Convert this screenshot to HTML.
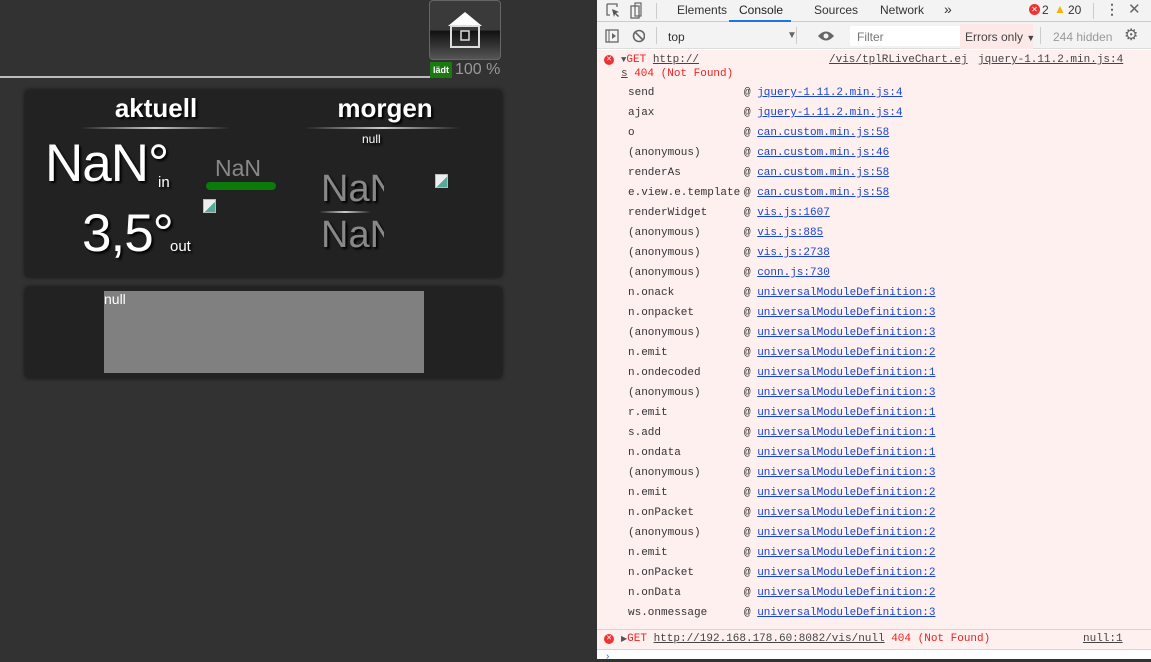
<!DOCTYPE html>
<html><head><meta charset="utf-8"><style>
*{margin:0;padding:0;box-sizing:border-box}
body{width:1151px;height:659px;overflow:hidden;background:#323232;font-family:"Liberation Sans",sans-serif;position:relative}
.abs{position:absolute}
.panel{position:absolute;background:#222;border-radius:4px;box-shadow:0 0 4px #111}
.w{color:#fff;text-shadow:2px 2px 2px #000}
.hr{position:absolute;height:2px;background:linear-gradient(to right,transparent,#ccc,transparent)}
#dev{position:absolute;left:597px;top:0;width:554px;height:659px;background:#fff;font-family:"Liberation Sans",sans-serif;font-size:12px;color:#333}
.mono{font-family:"Liberation Mono",monospace;font-size:11px}
.row{position:absolute;left:31px;height:20px;line-height:20px}
.row .a{position:absolute;left:0}
.row .b{position:absolute;left:116px;white-space:nowrap}
.lnk{color:#1a45d8;text-decoration:underline}
.brk{position:absolute;width:13px;height:14px;background:linear-gradient(135deg,#eee 55%,#5a9 55%);border:1px solid #bbb}
</style></head><body>
<div class="abs" style="left:429px;top:0;width:72px;height:60px;border:1px solid #666;border-radius:4px;background:linear-gradient(#3a3a3a 0,#3a3a3a 50%,#111 52%,#555 100%)">
<svg width="72" height="60" style="position:absolute;left:-1px;top:-1px"><polygon points="36,12 19,26 53,26" fill="#fff"/><rect x="22" y="26" width="28" height="21" fill="none" stroke="#ddd" stroke-width="2"/><rect x="32" y="31" width="8" height="9" fill="none" stroke="#ddd" stroke-width="1.5"/></svg>
</div>
<div class="abs" style="left:430px;top:62px;width:22px;height:16px;background:#1a7a10;color:#fff;font-size:9px;font-weight:bold;line-height:16px;text-align:center">lädt</div>
<div class="abs" style="left:455px;top:61px;color:#999;font-size:16px">100 %</div>
<div class="abs" style="left:0;top:76px;width:430px;height:2px;background:#bbb"></div>

<div class="panel" style="left:25px;top:90px;width:477px;height:187px">
<div class="abs w" style="left:0;width:262px;top:3px;text-align:center;font-size:26px;font-weight:bold">aktuell</div>
<div class="hr" style="left:55px;width:150px;top:37px"></div>
<div class="abs w" style="left:255px;width:210px;top:3px;text-align:center;font-size:26px;font-weight:bold">morgen</div>
<div class="hr" style="left:280px;width:155px;top:37px"></div>
<div class="abs w" style="left:337px;top:42px;font-size:12px">null</div>
<div class="abs w" style="left:20px;top:43px;font-size:53px;letter-spacing:-1px">NaN°</div>
<div class="abs w" style="left:133px;top:84px;font-size:15px">in</div>
<div class="abs" style="left:190px;top:65px;color:#888;font-size:23px">NaN</div>
<div class="abs" style="left:181px;top:92px;width:70px;height:8px;background:#0a7a0a;border-radius:4px"></div>
<div class="brk" style="left:178px;top:109px"></div>
<div class="abs w" style="left:57px;top:113px;font-size:53px;letter-spacing:-1px">3,5°</div>
<div class="abs w" style="left:145px;top:148px;font-size:15px">out</div>
<div class="abs" style="left:296px;top:78px;width:63px;overflow:hidden;color:#888;font-size:38px;text-shadow:2px 2px 2px #000;white-space:nowrap">NaN</div>
<div class="hr" style="left:294px;width:52px;top:121px"></div>
<div class="abs" style="left:296px;top:124px;width:63px;overflow:hidden;color:#888;font-size:38px;text-shadow:2px 2px 2px #000;white-space:nowrap">NaN</div>
<div class="brk" style="left:410px;top:84px"></div>
</div>

<div class="panel" style="left:25px;top:287px;width:477px;height:91px">
<div class="abs" style="left:79px;top:4px;width:320px;height:82px;background:#808080"></div>
<div class="abs" style="left:79px;top:4px;color:#fff;font-size:14px">null</div>
</div>

<div id="dev">
<div class="abs" style="left:0;top:0;width:554px;height:22px;background:#f3f3f3;border-bottom:1px solid #ccc"></div>
<svg class="abs" style="left:8px;top:2px" width="40" height="18"><path d="M2 2h10v3M2 2v11h3" fill="none" stroke="#666" stroke-width="1.3"/><path d="M7 7l7 3-3 1 3 3-1 1-3-3-1 3z" fill="#555"/><rect x="26" y="4" width="8" height="12" fill="none" stroke="#666" stroke-width="1.3"/><rect x="30" y="1" width="6" height="13" fill="none" stroke="#666" stroke-width="1.2"/></svg>
<div class="abs" style="left:59px;top:3px;width:1px;height:16px;background:#ccc"></div>
<div class="abs" style="left:80px;top:3px">Elements</div>
<div class="abs" style="left:142px;top:3px;color:#222">Console</div>
<div class="abs" style="left:132px;top:20px;width:62px;height:2px;background:#1a73e8"></div>
<div class="abs" style="left:217px;top:3px">Sources</div>
<div class="abs" style="left:283px;top:3px">Network</div>
<div class="abs" style="left:347px;top:1px;font-size:14px">»</div>
<div class="abs" style="left:432px;top:4px;width:11px;height:11px;border-radius:50%;background:#e33;color:#fff;font-size:8px;line-height:11px;text-align:center">✕</div>
<div class="abs" style="left:445px;top:3px">2</div>
<div class="abs" style="left:457px;top:2px;color:#f4b400;font-size:12px">▲</div>
<div class="abs" style="left:471px;top:3px">20</div>
<div class="abs" style="left:496px;top:3px;width:1px;height:16px;background:#ccc"></div>
<div class="abs" style="left:508px;top:1px;font-size:14px;font-weight:bold;color:#666">⋮</div>
<div class="abs" style="left:531px;top:0px;font-size:15px;color:#666">✕</div>

<div class="abs" style="left:0;top:22px;width:554px;height:27px;background:#f3f3f3;border-bottom:1px solid #ddd"></div>
<svg class="abs" style="left:8px;top:29px" width="40" height="15"><rect x="1" y="1" width="12" height="12" fill="none" stroke="#666" stroke-width="1.3"/><path d="M4 1v12" stroke="#666"/><path d="M7 4l4 3-4 3z" fill="#666"/><circle cx="34" cy="7" r="5.5" fill="none" stroke="#666" stroke-width="1.6"/><path d="M30 3l8 8" stroke="#666" stroke-width="1.6"/></svg>
<div class="abs" style="left:59px;top:27px;width:1px;height:17px;background:#ccc"></div>
<div class="abs" style="left:71px;top:30px;color:#333">top</div>
<div class="abs" style="left:190px;top:30px;color:#666;font-size:10px">▼</div>
<div class="abs" style="left:199px;top:27px;width:1px;height:17px;background:#ccc"></div>
<svg class="abs" style="left:220px;top:30px" width="18" height="12"><path d="M1 6q8-9 16 0q-8 9-16 0z" fill="#666"/><circle cx="9" cy="6" r="2.5" fill="#f3f3f3"/></svg>
<div class="abs" style="left:253px;top:26px;width:110px;height:20px;background:#fff"></div>
<div class="abs" style="left:260px;top:30px;color:#777">Filter</div>
<div class="abs" style="left:363px;top:24px;width:73px;height:25px;background:#fde8e8"></div>
<div class="abs" style="left:368px;top:30px;color:#444">Errors only <span style="font-size:9px">▼</span></div>
<div class="abs" style="left:443px;top:27px;width:1px;height:17px;background:#ccc"></div>
<div class="abs" style="left:456px;top:30px;color:#999">244 hidden</div>
<div class="abs" style="left:527px;top:25px;font-size:16px;color:#666">⚙</div>

<div class="abs" style="left:0;top:50px;width:554px;height:580px;background:#fff0f0"></div>
<div class="abs" style="left:0;top:629px;width:554px;height:1px;background:#f5c8c8"></div>
<div class="abs" style="left:0;top:630px;width:554px;height:20px;background:#fff0f0;border-bottom:1px solid #f5c8c8"></div>

<div class="abs" style="left:7px;top:55px;width:10px;height:10px;border-radius:50%;background:#e33;color:#fff;font-size:7px;line-height:10px;text-align:center">✕</div>
<div class="abs mono" style="left:24px;top:54px;color:#e22;white-space:nowrap"><span style="color:#555;font-size:9px">▼</span>GET <span style="color:#444;text-decoration:underline">http://</span></div>
<div class="abs mono" style="left:232px;top:54px;color:#444;text-decoration:underline">/vis/tplRLiveChart.ej</div>
<div class="abs mono" style="left:381px;top:54px;color:#444;text-decoration:underline">jquery-1.11.2.min.js:4</div>
<div class="abs mono" style="left:24px;top:68px;color:#e22"><span style="color:#444;text-decoration:underline">s</span> 404 (Not Found)</div>

<div class="mono">
<div class="row" style="top:83px"><span class="a">send</span><span class="b">@ <span class="lnk">jquery-1.11.2.min.js:4</span></span></div>
<div class="row" style="top:103px"><span class="a">ajax</span><span class="b">@ <span class="lnk">jquery-1.11.2.min.js:4</span></span></div>
<div class="row" style="top:123px"><span class="a">o</span><span class="b">@ <span class="lnk">can.custom.min.js:58</span></span></div>
<div class="row" style="top:143px"><span class="a">(anonymous)</span><span class="b">@ <span class="lnk">can.custom.min.js:46</span></span></div>
<div class="row" style="top:163px"><span class="a">renderAs</span><span class="b">@ <span class="lnk">can.custom.min.js:58</span></span></div>
<div class="row" style="top:183px"><span class="a">e.view.e.template</span><span class="b">@ <span class="lnk">can.custom.min.js:58</span></span></div>
<div class="row" style="top:203px"><span class="a">renderWidget</span><span class="b">@ <span class="lnk">vis.js:1607</span></span></div>
<div class="row" style="top:223px"><span class="a">(anonymous)</span><span class="b">@ <span class="lnk">vis.js:885</span></span></div>
<div class="row" style="top:243px"><span class="a">(anonymous)</span><span class="b">@ <span class="lnk">vis.js:2738</span></span></div>
<div class="row" style="top:263px"><span class="a">(anonymous)</span><span class="b">@ <span class="lnk">conn.js:730</span></span></div>
<div class="row" style="top:283px"><span class="a">n.onack</span><span class="b">@ <span class="lnk">universalModuleDefinition:3</span></span></div>
<div class="row" style="top:303px"><span class="a">n.onpacket</span><span class="b">@ <span class="lnk">universalModuleDefinition:3</span></span></div>
<div class="row" style="top:323px"><span class="a">(anonymous)</span><span class="b">@ <span class="lnk">universalModuleDefinition:3</span></span></div>
<div class="row" style="top:343px"><span class="a">n.emit</span><span class="b">@ <span class="lnk">universalModuleDefinition:2</span></span></div>
<div class="row" style="top:363px"><span class="a">n.ondecoded</span><span class="b">@ <span class="lnk">universalModuleDefinition:1</span></span></div>
<div class="row" style="top:383px"><span class="a">(anonymous)</span><span class="b">@ <span class="lnk">universalModuleDefinition:3</span></span></div>
<div class="row" style="top:403px"><span class="a">r.emit</span><span class="b">@ <span class="lnk">universalModuleDefinition:1</span></span></div>
<div class="row" style="top:423px"><span class="a">s.add</span><span class="b">@ <span class="lnk">universalModuleDefinition:1</span></span></div>
<div class="row" style="top:443px"><span class="a">n.ondata</span><span class="b">@ <span class="lnk">universalModuleDefinition:1</span></span></div>
<div class="row" style="top:463px"><span class="a">(anonymous)</span><span class="b">@ <span class="lnk">universalModuleDefinition:3</span></span></div>
<div class="row" style="top:483px"><span class="a">n.emit</span><span class="b">@ <span class="lnk">universalModuleDefinition:2</span></span></div>
<div class="row" style="top:503px"><span class="a">n.onPacket</span><span class="b">@ <span class="lnk">universalModuleDefinition:2</span></span></div>
<div class="row" style="top:523px"><span class="a">(anonymous)</span><span class="b">@ <span class="lnk">universalModuleDefinition:2</span></span></div>
<div class="row" style="top:543px"><span class="a">n.emit</span><span class="b">@ <span class="lnk">universalModuleDefinition:2</span></span></div>
<div class="row" style="top:563px"><span class="a">n.onPacket</span><span class="b">@ <span class="lnk">universalModuleDefinition:2</span></span></div>
<div class="row" style="top:583px"><span class="a">n.onData</span><span class="b">@ <span class="lnk">universalModuleDefinition:2</span></span></div>
<div class="row" style="top:603px"><span class="a">ws.onmessage</span><span class="b">@ <span class="lnk">universalModuleDefinition:3</span></span></div>
</div>

<div class="abs" style="left:7px;top:634px;width:10px;height:10px;border-radius:50%;background:#e33;color:#fff;font-size:7px;line-height:10px;text-align:center">✕</div>
<div class="abs mono" style="left:24px;top:633px;color:#e22;white-space:nowrap"><span style="color:#555;font-size:8px">▶</span>GET <span style="color:#444;text-decoration:underline">http://192.168.178.60:8082/vis/null</span> 404 (Not Found)</div>
<div class="abs mono" style="left:486px;top:633px;color:#444;text-decoration:underline">null:1</div>
<div class="abs" style="left:9px;top:651px;color:#1a73e8;font-size:10px">›</div>
</div>
</body></html>
